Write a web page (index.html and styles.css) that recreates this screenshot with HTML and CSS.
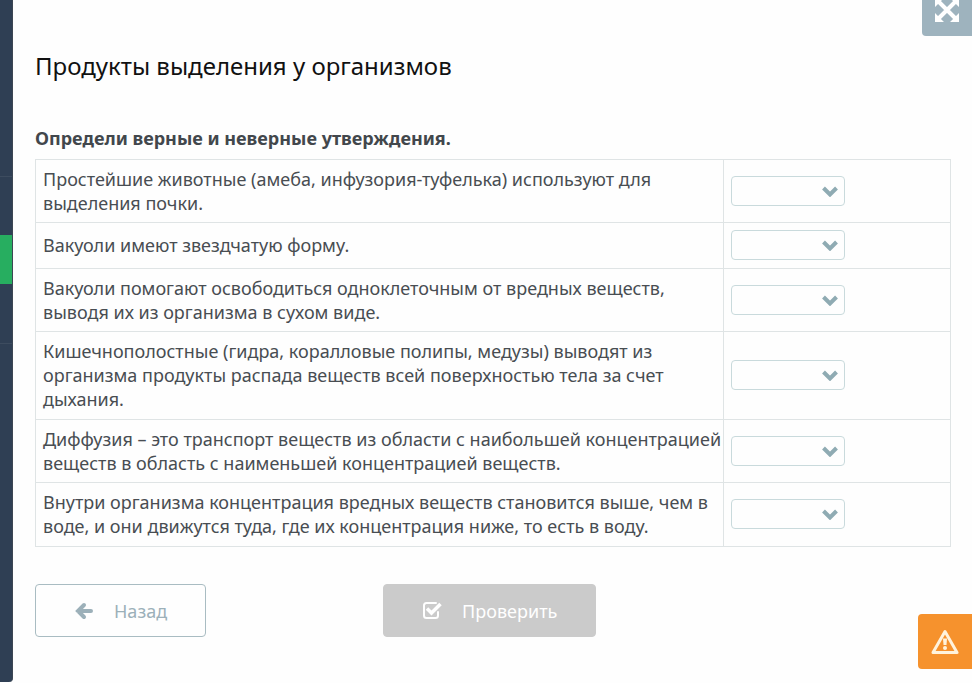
FILE: index.html
```html
<!DOCTYPE html>
<html lang="ru">
<head>
<meta charset="utf-8">
<meta name="viewport" content="width=device-width, initial-scale=1">
<title>Продукты выделения у организмов</title>
<link rel="stylesheet" href="styles.css">
</head>
<body>
<div class="page">
  <aside class="rail">
    <div class="rail-item rail-top"></div>
    <div class="rail-item"></div>
    <div class="rail-item rail-active"></div>
    <div class="rail-item"></div>
    <div class="rail-item rail-rest"></div>
  </aside>
  <main class="content">
    <h1 class="title">Продукты выделения у организмов</h1>
    <h2 class="task">Определи верные и неверные утверждения.</h2>
    <table class="statements">
      <tbody>
        <tr>
          <td><label for="s1">Простейшие животные (амеба, инфузория-туфелька) используют для выделения почки.</label></td>
          <td class="answer"><select id="s1" class="choice"><option></option></select></td>
        </tr>
        <tr>
          <td><label for="s2">Вакуоли имеют звездчатую форму.</label></td>
          <td class="answer"><select id="s2" class="choice"><option></option></select></td>
        </tr>
        <tr>
          <td><label for="s3">Вакуоли помогают освободиться одноклеточным от вредных веществ, выводя их из организма в сухом виде.</label></td>
          <td class="answer"><select id="s3" class="choice"><option></option></select></td>
        </tr>
        <tr>
          <td><label for="s4">Кишечнополостные (гидра, коралловые полипы, медузы) выводят из организма продукты распада веществ всей поверхностью тела за счет дыхания.</label></td>
          <td class="answer"><select id="s4" class="choice"><option></option></select></td>
        </tr>
        <tr>
          <td><label for="s5">Диффузия – это транспорт веществ из области с наибольшей концентрацией веществ в область с наименьшей концентрацией веществ.</label></td>
          <td class="answer"><select id="s5" class="choice"><option></option></select></td>
        </tr>
        <tr>
          <td><label for="s6">Внутри организма концентрация вредных веществ становится выше, чем в воде, и они движутся туда, где их концентрация ниже, то есть в воду.</label></td>
          <td class="answer"><select id="s6" class="choice"><option></option></select></td>
        </tr>
      </tbody>
    </table>
    <div class="actions">
      <button type="button" class="btn btn-back">
        <svg class="icon" viewBox="0 0 20 20" aria-hidden="true"><path d="M17 10H4M10 4L4 10L10 16" fill="none" stroke="currentColor" stroke-width="4" stroke-linejoin="miter" stroke-linecap="round"/></svg>
        <span>Назад</span>
      </button>
      <button type="button" class="btn btn-check">
        <svg class="icon" viewBox="0 0 20 20" aria-hidden="true"><path d="M16 11V14.500Q16 17 13.500 17H4.500Q2 17 2 14.500V4.500Q2 2 4.500 2H14" fill="none" stroke="currentColor" stroke-width="2" stroke-linecap="round"/><path d="M5 7.500L9.500 12L18.500 3" fill="none" stroke="currentColor" stroke-width="3.500"/></svg>
        <span>Проверить</span>
      </button>
    </div>
  </main>
  <button type="button" class="tab tab-expand" aria-label="На весь экран">
    <svg class="icon-expand" viewBox="0 0 24 24" aria-hidden="true"><path d="M4 4L20 20M20 4L4 20" stroke="currentColor" stroke-width="4"/><path d="M0 0H9L0 9ZM24 0V9L15 0ZM0 24V15L9 24ZM24 24H15L24 15Z" fill="currentColor"/></svg>
  </button>
  <button type="button" class="tab tab-report" aria-label="Сообщить об ошибке">
    <svg class="icon-warning" viewBox="0 0 28 26" aria-hidden="true"><path d="M14 2.500L26 23.500H2Z" fill="none" stroke="currentColor" stroke-width="3" stroke-linejoin="round"/><path d="M12 9.500H16L15.500 16H12.500Z" fill="currentColor"/><circle cx="14" cy="19" r="2" fill="currentColor"/></svg>
  </button>
</div>
</body>
</html>
```
FILE: styles.css
```css
* {
  box-sizing: border-box;
}

body {
  margin: 0;
  background: #fefefe;
  color: #484d52;
  font-family: "Noto Sans", "Open Sans", sans-serif;
  font-size: 18px;
  line-height: 24px;
}

.page {
  position: relative;
  display: flex;
  min-height: 100vh;
  padding-bottom: 1px;
  overflow: hidden;
}

/* Collapsed navigation rail */
.rail {
  display: flex;
  flex: 0 0 13px;
  flex-direction: column;
  overflow: hidden;
  background: #2f3f54;
  border-right: 1px solid #3c4653;
  border-bottom-right-radius: 4px;
}

.rail-item {
  height: 59px;
  border-bottom: 1px solid #3d4c5f;
}

.rail-top {
  height: 177px;
}

.rail-active {
  height: 49px;
  margin-top: -1px;
  background: #27ae60;
  border-bottom: 0;
}

.rail-active + .rail-item {
  height: 60px;
}

.rail-rest {
  flex: 1;
  border-bottom: 0;
}

.content {
  flex: 1;
  min-width: 0;
  padding: 50px 21px 45px 22px;
}

.title {
  margin: 0 0 44px;
  color: #111;
  font-size: 24px;
  font-weight: 400;
  line-height: 32px;
}

.task {
  margin: 0 0 9px;
  color: #42474c;
  font-size: 18px;
  font-weight: 700;
  line-height: 24px;
}

.statements {
  width: 100%;
  border-collapse: collapse;
}

.statements td {
  padding: 7px 0 7px 7px;
  border: 1px solid #dfe4e5;
  vertical-align: middle;
}

.statements tr:nth-child(even) td {
  padding-bottom: 8px;
}

.statements label {
  display: block;
}

.statements .answer {
  width: 227px;
}

.choice {
  display: block;
  width: 114px;
  height: 30px;
  padding: 0 32px 0 8px;
  appearance: none;
  border: 1px solid #c9dadc;
  border-radius: 4px;
  background: #fefefe url("data:image/svg+xml,%3Csvg xmlns='http://www.w3.org/2000/svg' viewBox='0 0 16 12'%3E%3Cpath d='M1.500 3L8 9.500L14.500 3' fill='none' stroke='%238fabb3' stroke-width='4'/%3E%3C/svg%3E") no-repeat right 6px center / 16px 12px;
  font: inherit;
}

.actions {
  display: flex;
  gap: 177px;
  margin-top: 37px;
}

.btn {
  display: flex;
  align-items: center;
  justify-content: center;
  gap: 20px;
  height: 53px;
  padding: 0 38px;
  border: 1px solid #a9bcc2;
  border-radius: 4px;
  font: inherit;
}

.btn-back {
  background: #fefefe;
  color: #9cb0b9;
}

.btn-check {
  background: #cbcbcb;
  border-color: #cbcbcb;
  color: #fff;
}

.icon {
  width: 20px;
  height: 20px;
}

/* Tabs pinned over the right edge */
.tab {
  position: absolute;
  right: 0;
  display: flex;
  align-items: center;
  justify-content: center;
  padding: 0;
  border: 0;
  color: #fff;
}

.tab-expand {
  top: -16px;
  width: 50px;
  height: 52px;
  background: #9eb3be;
  border-radius: 4px 0 0 4px;
}

.tab-report {
  bottom: 14px;
  width: 54px;
  height: 55px;
  background: #f6922d;
  border-radius: 4px 0 0 4px;
}

.icon-expand {
  width: 24px;
  height: 24px;
}

.icon-warning {
  width: 28px;
  height: 26px;
  color: #fff3dc;
}
```
